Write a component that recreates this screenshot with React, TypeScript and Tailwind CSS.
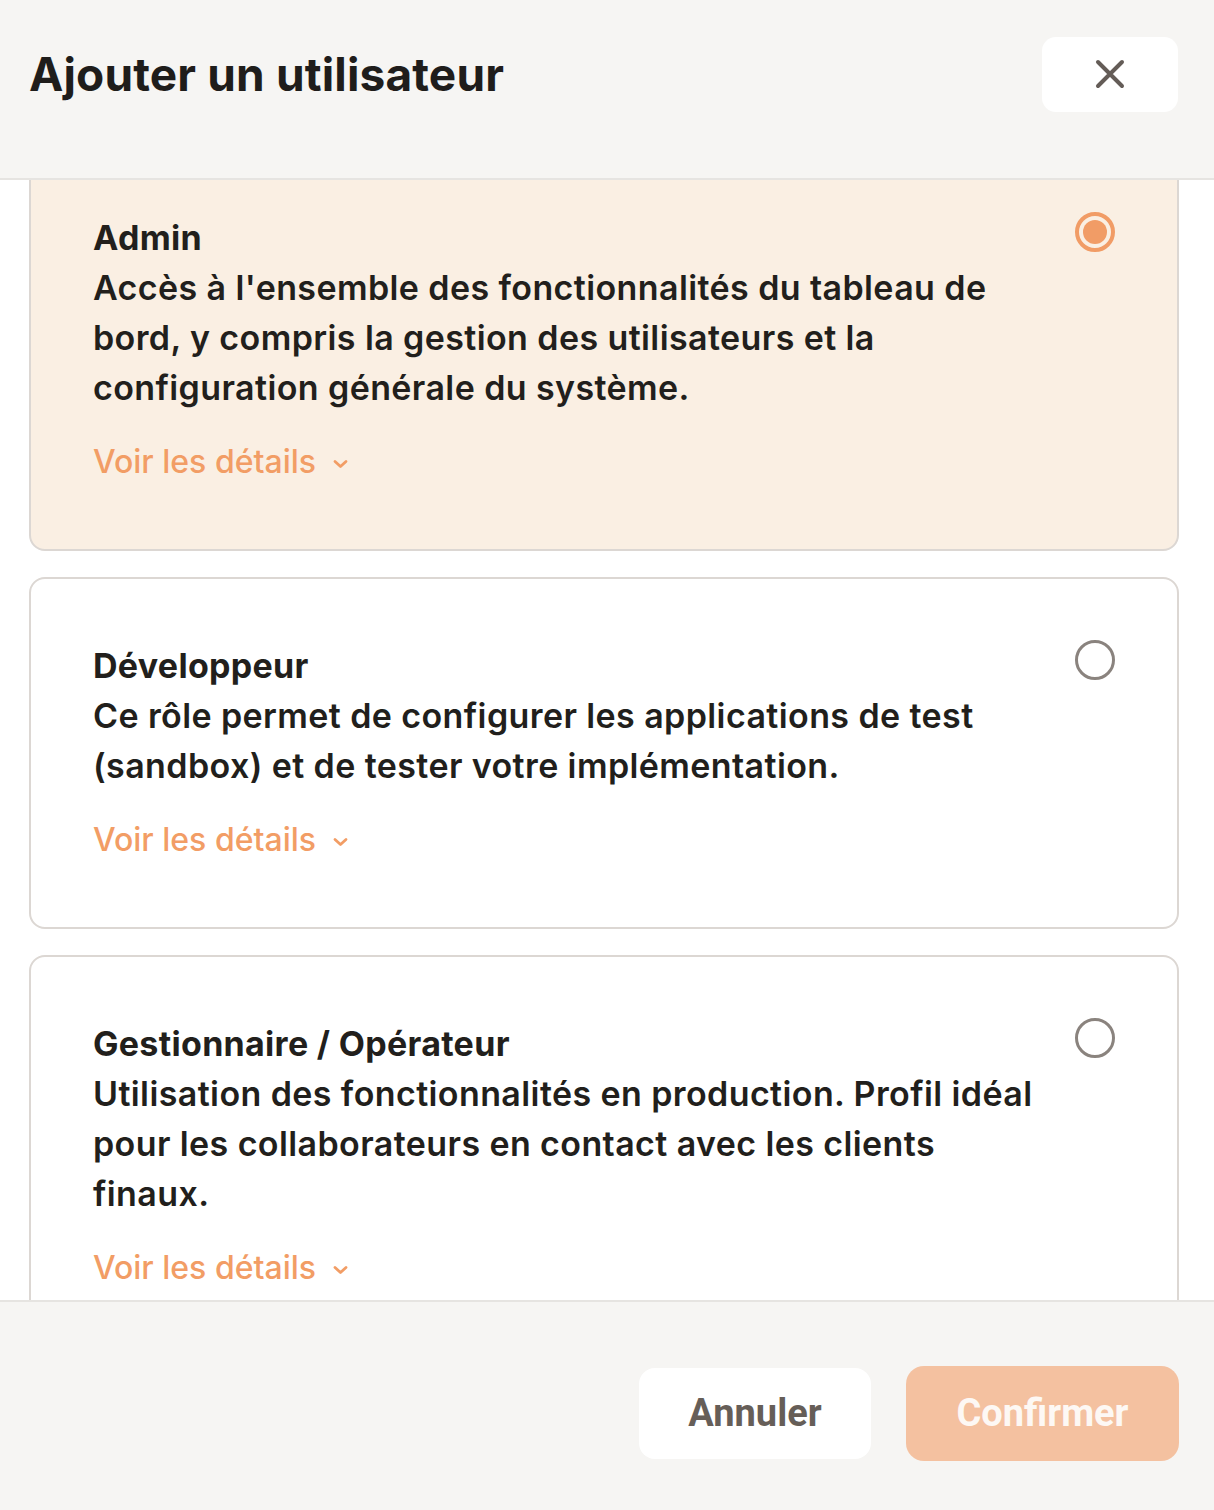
import React from "react";

const roles = [
  {
    title: "Admin",
    lines: [
      "Accès à l'ensemble des fonctionnalités du tableau de",
      "bord, y compris la gestion des utilisateurs et la",
      "configuration générale du système.",
    ],
    selected: true,
  },
  {
    title: "Développeur",
    lines: [
      "Ce rôle permet de configurer les applications de test",
      "(sandbox) et de tester votre implémentation.",
    ],
    selected: false,
  },
  {
    title: "Gestionnaire / Opérateur",
    lines: [
      "Utilisation des fonctionnalités en production. Profil idéal",
      "pour les collaborateurs en contact avec les clients",
      "finaux.",
    ],
    selected: false,
  },
];

function Radio({ selected }: { selected: boolean }) {
  if (selected) {
    return (
      <div className="mt-[-1px] flex h-[40px] w-[40px] shrink-0 items-center justify-center rounded-full border-[4px] border-[#f19c66]">
        <div className="h-[24px] w-[24px] rounded-full bg-[#f19c66]" />
      </div>
    );
  }
  return (
    <div className="mt-[-1px] h-[40px] w-[40px] shrink-0 rounded-full border-[3px] border-[#8a837e]" />
  );
}

function Card({
  title,
  lines,
  selected,
}: {
  title: string;
  lines: string[];
  selected: boolean;
}) {
  return (
    <div
      className={
        selected
          ? "flex items-start justify-between rounded-[16px] border-2 border-[#dcd7d3] bg-[#faefe3] p-[62px]"
          : "flex items-start justify-between rounded-[16px] border-2 border-[#dcd7d3] bg-white p-[62px]"
      }
    >
      <div className="flex flex-col">
        <div className="text-[34px] font-bold leading-[50px] tracking-[0.3px] text-[#221f1c]">{title}</div>
        <div className="text-[34px] font-semibold leading-[50px] tracking-[0.4px] text-[#221f1c]">
          {lines.map((l, i) => (
            <div key={i} className="whitespace-nowrap">
              {l}
            </div>
          ))}
        </div>
        <div className="mt-6 flex items-center gap-[17px] text-[32px] font-medium leading-[50px] text-[#f29d65]">
          <span>Voir les détails</span>
          <svg width="15" height="10" viewBox="0 0 15 10" fill="none" className="mt-[4px]">
            <path d="M2 2.5 L7.5 7.5 L13 2.5" stroke="#f29d65" strokeWidth="2.8" strokeLinecap="round" strokeLinejoin="round" />
          </svg>
        </div>
      </div>
      <Radio selected={selected} />
    </div>
  );
}

export default function App() {
  return (
    <div
      className="flex h-[1510px] w-full flex-col overflow-hidden bg-white"
      style={{ fontFamily: "Inter, 'Noto Sans', sans-serif" }}
    >
      <header className="flex h-[180px] shrink-0 items-center justify-between border-b-2 border-[#e6e4e1] bg-[#f6f5f3] pl-[29px] pr-[36px] pb-[30px]">
        <h1 className="text-[46px] font-bold tracking-[0.15px] text-[#1f1d1b]">Ajouter un utilisateur</h1>
        <button className="flex h-[75px] w-[136px] items-center justify-center rounded-[14px] bg-white">
          <svg width="30" height="30" viewBox="0 0 30 30" fill="none">
            <path d="M3 3 L27 27 M27 3 L3 27" stroke="#645c57" strokeWidth="4" strokeLinecap="round" />
          </svg>
        </button>
      </header>
      <main className="flex-1 overflow-hidden pl-[29px] pr-[35px]">
        <div className="mt-[-31px] flex flex-col gap-[26px]">
          {roles.map((r) => (
            <Card key={r.title} {...r} />
          ))}
        </div>
      </main>
      <footer
        className="flex h-[210px] shrink-0 items-center justify-end gap-[35px] border-t-2 border-[#e6e4e1] bg-[#f6f5f3] pr-[35px] pt-[14px]"
        style={{ fontFamily: "Roboto, 'Liberation Sans', sans-serif" }}
      >
        <button className="flex h-[91px] w-[232px] items-center justify-center rounded-[16px] bg-white text-[38px] font-bold text-[#665e58]">
          Annuler
        </button>
        <button className="flex h-[95px] w-[273px] items-center justify-center rounded-[18px] bg-[#f4c1a0] text-[38px] font-bold text-[#fdf8f4]">
          Confirmer
        </button>
      </footer>
    </div>
  );
}
